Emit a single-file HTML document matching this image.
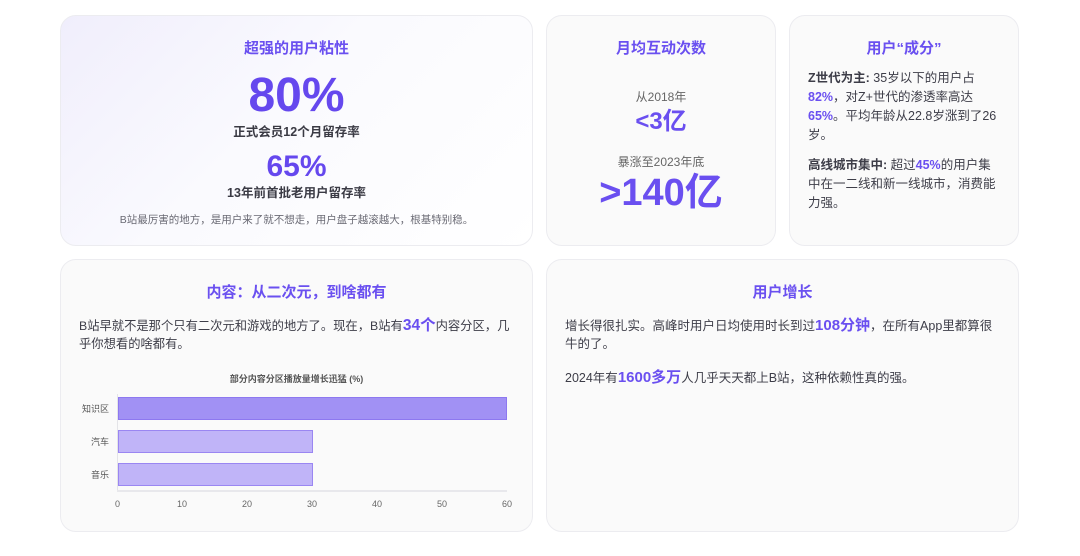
<!DOCTYPE html>
<html><head><meta charset="utf-8"><style>
*{margin:0;padding:0;box-sizing:border-box}
body{width:1080px;height:556px;background:#fff;font-family:"Liberation Sans","Noto Sans CJK SC",sans-serif;color:#3a3a44;position:relative;overflow:hidden}
.card{position:absolute;background:#fafafa;border:1px solid #ececf0;border-radius:16px}
.a{position:absolute;white-space:nowrap}
.c{left:0;right:0;text-align:center}
.t{font-size:15px;font-weight:700;color:#6a50f0}
.p{color:#6a4ff0;font-weight:700}
.txt{font-size:12.5px;line-height:19px;color:#3d3d48}
</style></head><body>
<div class="card" style="left:60px;top:15px;width:473px;height:231px;background:linear-gradient(135deg,#f0eefc 0%,#fafafe 45%,#fff 100%)">
 <div class="a c t" style="top:21px">超强的用户粘性</div>
 <div class="a c p" style="top:52px;font-size:48px;line-height:56px;color:#6548ee">80%</div>
 <div class="a c" style="top:105px;font-size:12.5px;font-weight:700;color:#3a3a44">正式会员12个月留存率</div>
 <div class="a c p" style="top:133px;font-size:30px;line-height:36px;color:#6548ee">65%</div>
 <div class="a c" style="top:166px;font-size:12.5px;font-weight:700;color:#3a3a44">13年前首批老用户留存率</div>
 <div class="a c" style="top:196px;font-size:10.5px;color:#6a6a74">B站最厉害的地方，是用户来了就不想走，用户盘子越滚越大，根基特别稳。</div>
</div>
<div class="card" style="left:546px;top:15px;width:230px;height:231px">
 <div class="a c t" style="top:21px">月均互动次数</div>
 <div class="a c" style="top:72px;font-size:12px;color:#666">从2018年</div>
 <div class="a c p" style="top:91px;font-size:24px;line-height:30px">&lt;3亿</div>
 <div class="a c" style="top:137px;font-size:12px;color:#666">暴涨至2023年底</div>
 <div class="a c p" style="top:154px;font-size:38px;line-height:46px">&gt;140亿</div>
</div>
<div class="card" style="left:789px;top:15px;width:230px;height:231px">
 <div class="a c t" style="top:21px">用户“成分”</div>
 <div class="a txt" style="left:18px;top:53px;white-space:normal;width:200px"><b>Z世代为主:</b> 35岁以下的用户占<br><span class="p">82%</span>，对Z+世代的渗透率高达<br><span class="p">65%</span>。平均年龄从22.8岁涨到了26<br>岁。</div>
 <div class="a txt" style="left:18px;top:140px;white-space:normal;width:200px"><b>高线城市集中:</b> 超过<span class="p">45%</span>的用户集<br>中在一二线和新一线城市，消费能<br>力强。</div>
</div>
<div class="card" style="left:60px;top:259px;width:473px;height:273px">
 <div class="a c t" style="top:21px">内容：从二次元，到啥都有</div>
 <div class="a txt" style="left:18px;top:56px;font-size:12.3px">B站早就不是那个只有二次元和游戏的地方了。现在，B站有<span class="p" style="font-size:15.5px">34个</span>内容分区，几</div>
 <div class="a txt" style="left:18px;top:75px;font-size:12.3px">乎你想看的啥都有。</div>
 <div class="a c" style="top:112px;font-size:9px;font-weight:700;color:#555">部分内容分区播放量增长迅猛 (%)</div>
 <div class="a" style="left:56px;top:134px;width:1px;height:97px;background:#e4e4e8"></div>
 <div class="a" style="left:56px;top:230px;width:390px;height:2px;background:#e8e8ec"></div>
 <div class="a" style="left:57px;top:137px;width:389px;height:23px;background:#a191f4;border:1px solid #8d78f0"></div>
 <div class="a" style="left:57px;top:170px;width:195px;height:23px;background:#c0b4f8;border:1px solid #9a86f2"></div>
 <div class="a" style="left:57px;top:203px;width:195px;height:23px;background:#c0b4f8;border:1px solid #9a86f2"></div>
 <div class="a" style="left:21px;top:142px;font-size:9px;color:#555">知识区</div>
 <div class="a" style="left:30px;top:175px;font-size:9px;color:#555">汽车</div>
 <div class="a" style="left:30px;top:208px;font-size:9px;color:#555">音乐</div>
 <div class="a" style="left:54px;top:239px;font-size:9px;color:#666">0</div>
 <div class="a" style="left:116px;top:239px;font-size:9px;color:#666">10</div>
 <div class="a" style="left:181px;top:239px;font-size:9px;color:#666">20</div>
 <div class="a" style="left:246px;top:239px;font-size:9px;color:#666">30</div>
 <div class="a" style="left:311px;top:239px;font-size:9px;color:#666">40</div>
 <div class="a" style="left:376px;top:239px;font-size:9px;color:#666">50</div>
 <div class="a" style="left:441px;top:239px;font-size:9px;color:#666">60</div>
</div>
<div class="card" style="left:546px;top:259px;width:473px;height:273px">
 <div class="a c t" style="top:21px">用户增长</div>
 <div class="a txt" style="left:18px;top:56px">增长得很扎实。高峰时用户日均使用时长到过<span class="p" style="font-size:15px">108分钟</span>，在所有App里都算很</div>
 <div class="a txt" style="left:18px;top:75px">牛的了。</div>
 <div class="a txt" style="left:18px;top:108px">2024年有<span class="p" style="font-size:15px">1600多万</span>人几乎天天都上B站，这种依赖性真的强。</div>
</div>
</body></html>
